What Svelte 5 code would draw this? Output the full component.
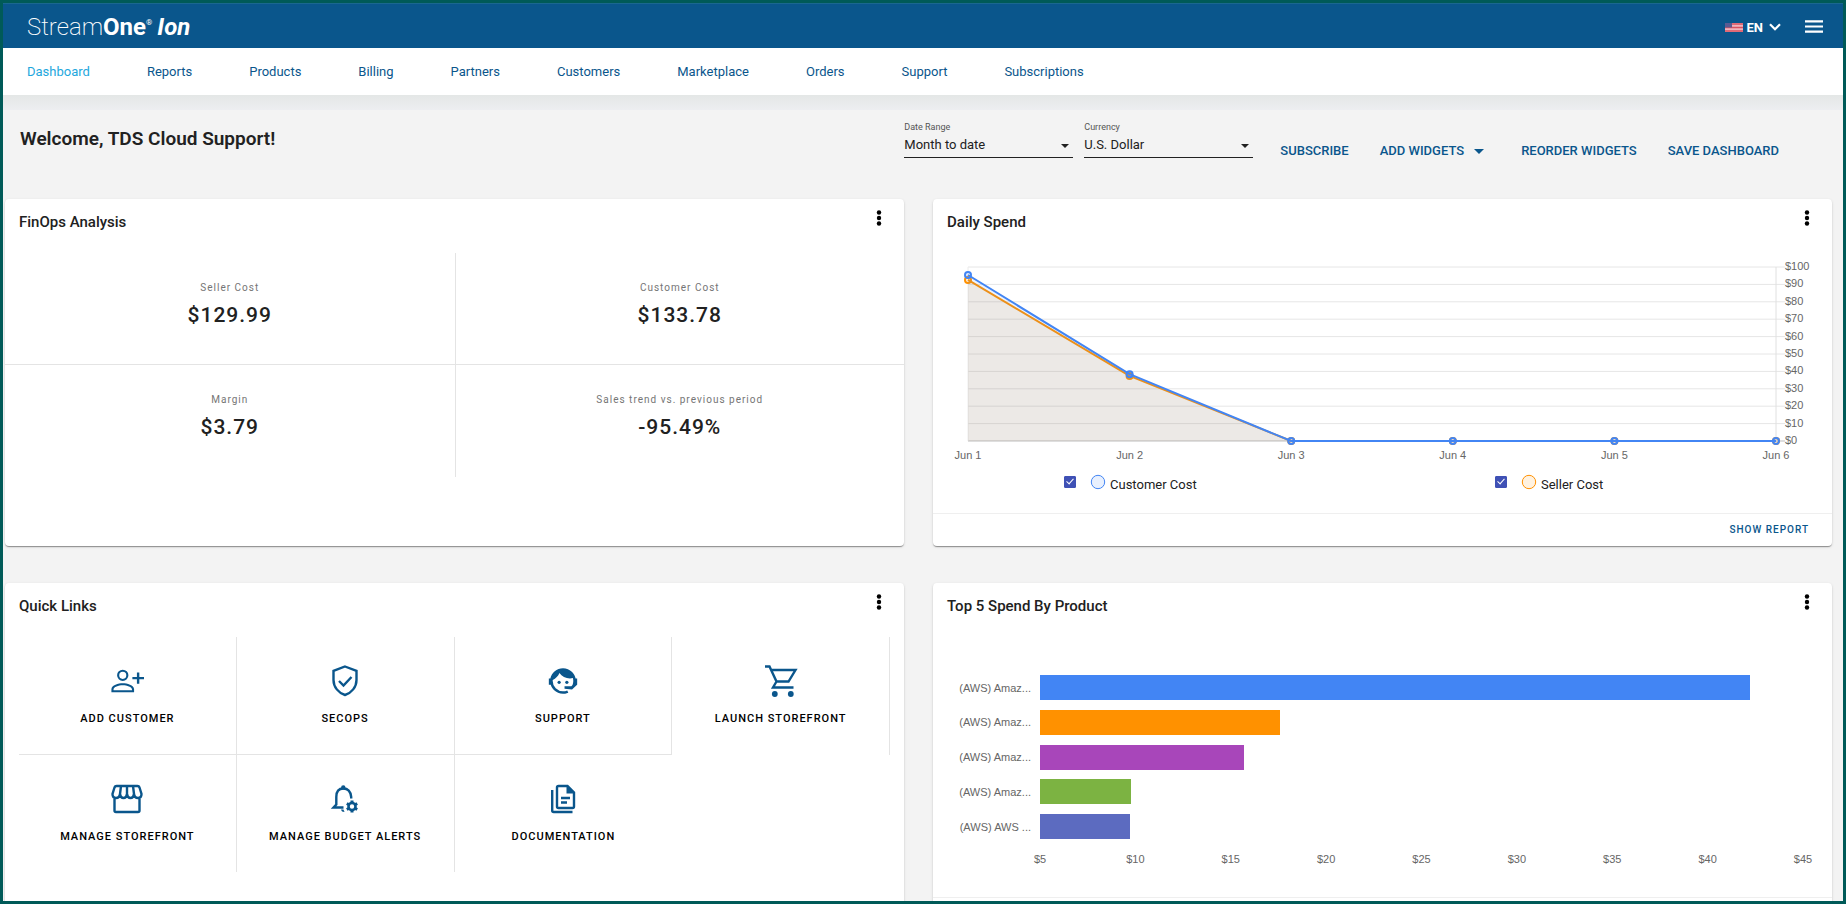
<script>
	const navItems = [
		'Dashboard',
		'Reports',
		'Products',
		'Billing',
		'Partners',
		'Customers',
		'Marketplace',
		'Orders',
		'Support',
		'Subscriptions'
	];
	let activeItem = 'Dashboard';
	let dateRange = 'Month to date';
	let currency = 'U.S. Dollar';

	const metrics = [
		{ label: 'Seller Cost', value: '$129.99' },
		{ label: 'Customer Cost', value: '$133.78' },
		{ label: 'Margin', value: '$3.79' },
		{ label: 'Sales trend vs. previous period', value: '-95.49%' }
	];

	const quickLinks = [
		{ icon: 'person', label: 'Add Customer' },
		{ icon: 'shield', label: 'SecOps' },
		{ icon: 'agent', label: 'Support' },
		{ icon: 'cart', label: 'Launch Storefront' },
		{ icon: 'store', label: 'Manage Storefront' },
		{ icon: 'bell', label: 'Manage Budget Alerts' },
		{ icon: 'docs', label: 'Documentation' }
	];

	// daily spend chart
	const days = ['Jun 1', 'Jun 2', 'Jun 3', 'Jun 4', 'Jun 5', 'Jun 6'];
	const spendTicks = [100, 90, 80, 70, 60, 50, 40, 30, 20, 10, 0];
	const plotLeft = 35;
	const plotTop = 14;
	const plotHeight = 174;
	let series = [
		{ name: 'Customer Cost', color: '#4285f4', values: [95.4, 38.4, 0, 0, 0, 0], shown: true },
		{ name: 'Seller Cost', color: '#ff9100', values: [92.6, 37.4, 0, 0, 0, 0], shown: true }
	];
	let chartWidth = 899;
	$: plotWidth = chartWidth - plotLeft - 56;
	$: xOf = (i) => plotLeft + (plotWidth * i) / (days.length - 1);
	const yOf = (value) => plotTop + plotHeight * (1 - value / 100);
	$: lines = series
		.filter((s) => s.shown)
		.map((s) => ({ ...s, points: s.values.map((v, i) => [xOf(i), yOf(v)]) }))
		.reverse();

	// top 5 products
	const products = [
		{ name: '(AWS) Amaz...', value: 42.2, color: '#4285f4' },
		{ name: '(AWS) Amaz...', value: 17.6, color: '#ff9100' },
		{ name: '(AWS) Amaz...', value: 15.7, color: '#a846ba' },
		{ name: '(AWS) Amaz...', value: 9.75, color: '#7cb342' },
		{ name: '(AWS) AWS ...', value: 9.7, color: '#5c6bc0' }
	];
	const productTicks = [5, 10, 15, 20, 25, 30, 35, 40, 45];
	const barWidth = (value) => ((value - 5) / 40) * 100;
</script>

{#snippet heading(title)}
	<header class="card-header">
		<h2>{title}</h2>
		<button type="button" class="kebab" aria-label="{title} options">
			<svg width="24" height="24" viewBox="0 0 24 24">
				<circle cx="12" cy="6.5" r="2.2" />
				<circle cx="12" cy="12" r="2.2" />
				<circle cx="12" cy="17.5" r="2.2" />
			</svg>
		</button>
	</header>
{/snippet}

<div class="app">
	<header class="topbar">
		<a class="logo" href="#home">
			<span class="thin">Stream</span><span class="bold">One</span><sup>®</sup><span class="ion">Ion</span>
		</a>
		<button type="button" class="language">
			<svg width="18" height="9" viewBox="0 0 18 9">
				<rect width="18" height="9" fill="#f0b4bd" />
				<path d="M0 1h18M0 4.5h18M0 8h18" stroke="#d9515f" stroke-width="1.6" />
				<rect width="7" height="4.5" fill="#5a5a92" />
			</svg>
			EN
			<svg class="chevron" width="12" height="8" viewBox="0 0 12 8">
				<path d="M1 1.2l5 5 5-5" fill="none" stroke="#fff" stroke-width="2.2" />
			</svg>
		</button>
		<button type="button" class="menu" aria-label="Menu">
			<svg width="18" height="13" viewBox="0 0 18 13">
				<path d="M0 1.3h18M0 6.5h18M0 11.7h18" stroke="#fff" stroke-width="2.2" />
			</svg>
		</button>
	</header>

	<nav>
		{#each navItems as item}
			<a
				href="#{item.toLowerCase()}"
				class:active={item == activeItem}
				on:click={() => (activeItem = item)}>{item}</a
			>
		{/each}
	</nav>

	<main>
		<div class="toolbar">
			<h1>Welcome, TDS Cloud Support!</h1>
			<div class="filters">
				<div class="field">
					<label for="date-range">Date Range</label>
					<select id="date-range" bind:value={dateRange}>
						<option>Month to date</option>
						<option>Last month</option>
						<option>Year to date</option>
					</select>
					<svg width="8" height="4" viewBox="0 0 8 4"><path d="M0 0h8L4 4z" /></svg>
				</div>
				<div class="field">
					<label for="currency">Currency</label>
					<select id="currency" bind:value={currency}>
						<option>U.S. Dollar</option>
						<option>Euro</option>
					</select>
					<svg width="8" height="4" viewBox="0 0 8 4"><path d="M0 0h8L4 4z" /></svg>
				</div>
			</div>
			<div class="actions">
				<button type="button">SUBSCRIBE</button>
				<button type="button" class="dropdown">
					ADD WIDGETS
					<svg width="10" height="5" viewBox="0 0 10 5"><path d="M0 0h10L5 5z" /></svg>
				</button>
				<button type="button">REORDER WIDGETS</button>
				<button type="button">SAVE DASHBOARD</button>
			</div>
		</div>

		<div class="widgets">
			<section class="card">
				{@render heading('FinOps Analysis')}
				<dl class="metrics">
					{#each metrics as metric}
						<div class="metric">
							<dt>{metric.label}</dt>
							<dd>{metric.value}</dd>
						</div>
					{/each}
				</dl>
			</section>

			<section class="card">
				{@render heading('Daily Spend')}
				<div class="chart" bind:clientWidth={chartWidth}>
					<svg width={chartWidth} height="215">
						{#each spendTicks as tick}
							<line
								x1={plotLeft}
								x2={plotLeft + plotWidth + 9}
								y1={yOf(tick)}
								y2={yOf(tick)}
								stroke={tick ? '#e6e6e6' : '#bdbdbd'}
							/>
							<text x={plotLeft + plotWidth + 9} y={yOf(tick) + 3}>${tick}</text>
						{/each}
						<line x1={xOf(0)} x2={xOf(0)} y1={plotTop} y2={yOf(0)} stroke="#ececec" />
						<line x1={xOf(5)} x2={xOf(5)} y1={plotTop} y2={yOf(0)} stroke="#e0e0e0" />
						{#each days as day, i}
							<text x={xOf(i)} y="206" text-anchor="middle">{day}</text>
						{/each}
						{#each lines as line}
							<polygon
								points="{xOf(0)},{yOf(0)} {line.points.join(' ')}"
								fill={line.color}
								fill-opacity="0.1"
							/>
							<polyline points={line.points.join(' ')} fill="none" stroke={line.color} stroke-width="2" />
							{#each line.points as [x, y]}
								<circle
									cx={x}
									cy={y}
									r="3"
									fill={line.color}
									fill-opacity="0.1"
									stroke={line.color}
									stroke-width="2"
								/>
							{/each}
						{/each}
					</svg>
				</div>
				<div class="legend">
					{#each series as s}
						<label>
							<input type="checkbox" bind:checked={s.shown} />
							<svg width="16" height="16" viewBox="0 0 16 16">
								<circle cx="8" cy="8" r="6.7" fill={s.color} fill-opacity="0.12" stroke={s.color} />
							</svg>
							<span>{s.name}</span>
						</label>
					{/each}
				</div>
				<footer><a href="#daily-report">SHOW REPORT</a></footer>
			</section>

			<section class="card">
				{@render heading('Quick Links')}
				<div class="links">
					{#each quickLinks as link}
						<a href="#{link.icon}">
							{#if link.icon == 'person'}
								<svg viewBox="0 0 24 24">
									<path
										d="M19 6v3.2h-3.2v1.6H19V14h1.700v-3.200H24V9.200h-3.300V6zM9 12a4 4 0 1 0 0-8 4 4 0 0 0 0 8zm0-6.500a2.500 2.500 0 1 1 0 5 2.500 2.500 0 0 1 0-5zM9 13.500c-3 0-8 1.200-8 4.300V20h16v-2.200c0-3.100-5-4.300-8-4.300zm6.500 5h-13v-.7c0-1.600 3.500-2.800 6.500-2.800s6.500 1.200 6.500 2.800z"
									/>
								</svg>
							{:else if link.icon == 'shield'}
								<svg class="stroked" viewBox="0 0 34 34">
									<path d="M17 2.500L28.500 6.800V16c0 7-5 13-11.500 15C10.500 29 5.500 23 5.500 16V6.800z" />
									<path d="M11 17l4.500 4.500 8-8.500" />
								</svg>
							{:else if link.icon == 'agent'}
								<svg viewBox="0 0 24 24">
									<path
										d="M18.720 14.760C19.070 13.910 19.260 13 19.260 12C19.260 11.280 19.150 10.590 18.960 9.950C18.310 10.100 17.630 10.180 16.920 10.180C13.860 10.180 11.150 8.670 9.500 6.340C8.610 8.500 6.910 10.260 4.770 11.220C4.730 11.470 4.730 11.740 4.730 12A7.270 7.270 0 0 0 12 19.270C13.050 19.270 14.060 19.040 14.970 18.630C15.540 19.720 15.800 20.260 15.780 20.260C14.140 20.810 12.870 21.080 12 21.080C9.580 21.080 7.270 20.130 5.570 18.420C4.530 17.380 3.760 16.110 3.330 14.730H2V10.180H3.090C3.930 6.040 7.600 2.920 12 2.920C14.400 2.920 16.710 3.870 18.420 5.580C19.690 6.840 20.540 8.450 20.890 10.180H22V14.730H21.940L18.380 18L13.080 17.400V15.730H17.910z"
									/>
									<circle cx="9.270" cy="12.900" r="1.140" />
									<circle cx="14.720" cy="12.900" r="1.140" />
								</svg>
							{:else if link.icon == 'cart'}
								<svg class="stroked" viewBox="0 0 34 34">
									<path d="M1 2.500h4.500L12.500 17.500h12L31.500 6H7M12.500 17.500l-3.500 6h20.500" />
									<circle class="solid" cx="10.800" cy="30" r="2.900" />
									<circle class="solid" cx="26.800" cy="30" r="2.900" />
								</svg>
							{:else if link.icon == 'store'}
								<svg class="stroked" viewBox="0 0 34 34">
									<path
										d="M4.500 16v12.500q0 1.500 1.500 1.500h22q1.500 0 1.500-1.500V16M6.500 4h21q1.500 0 2 1.500L31.500 12q0 4-3.500 4t-4-4q-.5 4-3.500 4T17 12q-.5 4-3.500 4T10 12q-.5 4-4 4t-3.500-4L4.500 5.500Q5 4 6.500 4zM11 4l-1 8M17 4v8M23 4l1 8"
									/>
								</svg>
							{:else if link.icon == 'bell'}
								<svg class="stroked" viewBox="0 0 34 34">
									<path d="M15.500 25.500H5.500l2.800-3V15q0-8.500 7-8.500T23.200 15v1.500" />
									<circle class="solid" cx="15.300" cy="5.500" r="2.200" />
									<path class="solid" d="M13 27.500h2.500l1 2.500q-3 0-3.500-2.500z" />
									<circle cx="24" cy="24.500" r="3.500" stroke-width="2.600" />
									<path
										d="M24 18.500v2.500M24 28v2.500M18.800 21.500l2.200 1.200M27 26.300l2.200 1.200M18.800 27.500l2.200-1.200M27 22.700l2.200-1.200"
										stroke-width="3"
									/>
								</svg>
							{:else}
								<svg class="stroked" viewBox="0 0 34 34">
									<path
										d="M12.500 4h9L28 10.500V24.500q0 1.500-1.500 1.500h-14Q11 26 11 24.500V5.500Q11 4 12.500 4zM6.200 8v20.500q0 1.500 1.500 1.500H26.500M15 16h9M15 20.500h6"
									/>
									<path class="solid" d="M20.500 4v7.500H28L21.500 4z" />
								</svg>
							{/if}
							<span>{link.label}</span>
						</a>
					{/each}
				</div>
			</section>

			<section class="card">
				{@render heading('Top 5 Spend By Product')}
				<div class="products">
					<div class="bars">
						{#each products as product}
							<div class="bar-row">
								<span>{product.name}</span>
								<div class="track">
									<div
										class="bar"
										style="width: {barWidth(product.value)}%; background-color: {product.color}"
									></div>
								</div>
							</div>
						{/each}
					</div>
					<div class="axis">
						{#each productTicks as tick}
							<span>${tick}</span>
						{/each}
					</div>
				</div>
				<footer></footer>
			</section>
		</div>
	</main>
</div>

<style>
	:global(body) {
		background-color: #f3f3f3;
	}
	.app {
		box-sizing: border-box;
		height: 100vh;
		border: 3px solid #005a58;
		display: flex;
		flex-direction: column;
		overflow: hidden;
		font-family: Roboto, 'Liberation Sans', sans-serif;
		font-size: 13px;
		color: #212121;
		background-color: #f3f3f3;
	}
	h1,
	h2,
	dl,
	dd {
		margin: 0;
	}
	a {
		text-decoration: none;
	}
	button {
		font: inherit;
		color: inherit;
		background-color: transparent;
		border: none;
		padding: 0;
		cursor: pointer;
	}

	.topbar {
		flex: none;
		display: flex;
		align-items: center;
		height: 44px;
		border-top: 1px solid #1a6790;
		padding: 0 20px 0 24px;
		background-color: #0a568c;
		color: white;
	}
	.logo {
		margin-right: auto;
		padding-top: 3px;
		color: white;
		font-size: 24px;
		line-height: 41px;
	}
	.thin {
		font-weight: 200;
	}
	.bold {
		font-weight: 700;
	}
	.ion {
		margin-left: 5px;
		font-weight: 700;
		font-style: italic;
	}
	sup {
		font-size: 8px;
		line-height: 1;
		vertical-align: 10px;
	}
	.language {
		display: flex;
		align-items: center;
		gap: 4px;
		margin-top: 2px;
		font-weight: 700;
	}
	.chevron {
		margin-left: 2px;
	}
	.menu {
		display: flex;
		margin-left: 24px;
	}

	nav {
		flex: none;
		display: flex;
		gap: 57px;
		padding: 0 24px;
		line-height: 47px;
		background-color: white;
	}
	nav a {
		color: #0a568c;
	}
	nav .active {
		color: #1ea7dd;
	}

	main {
		flex: 1;
		overflow-y: auto;
		scrollbar-width: none;
		padding: 0 11px 37px 2px;
		background: linear-gradient(#e4e7e6, #edeef1) top / 100% 15px no-repeat #f3f3f3;
	}
	.toolbar {
		display: flex;
		align-items: flex-start;
		box-sizing: border-box;
		min-height: 104px;
		padding: 26px 53px 0 15px;
	}
	h1 {
		margin-right: auto;
		font-size: 19px;
		line-height: 36px;
		font-weight: 600;
	}
	.filters {
		display: flex;
		gap: 11px;
	}
	.field {
		position: relative;
		width: 169px;
	}
	.field label {
		display: block;
		font-size: 9px;
		line-height: 12px;
		color: #555;
	}
	.field select {
		appearance: none;
		width: 100%;
		height: 25px;
		padding: 0 0 2px;
		font: inherit;
		color: inherit;
		background-color: transparent;
		border: none;
		border-bottom: 1px solid #212121;
		border-radius: 0;
	}
	.field svg {
		position: absolute;
		right: 4px;
		top: 23px;
		fill: #212121;
		pointer-events: none;
	}
	.actions {
		display: flex;
		gap: 31px;
		padding: 20px 0 0 27px;
		color: #0a568c;
		font-weight: 500;
		line-height: 20px;
	}
	.dropdown {
		display: flex;
		align-items: center;
		gap: 10px;
		padding-right: 6px;
	}
	.dropdown svg {
		fill: #0a568c;
	}

	.widgets {
		display: grid;
		grid-template-columns: 1fr 1fr;
		gap: 37px 29px;
	}
	.card {
		display: flex;
		flex-direction: column;
		min-width: 0;
		min-height: 347px;
		border-radius: 4px;
		background-color: white;
		box-shadow:
			0 2px 1px -1px rgba(0, 0, 0, 0.2),
			0 1px 1px 0 rgba(0, 0, 0, 0.2),
			0 1px 3px 0 rgba(0, 0, 0, 0.12);
	}
	.card-header {
		display: flex;
		justify-content: space-between;
		align-items: flex-start;
		height: 48px;
		padding: 6px 13px 0 14px;
	}
	h2 {
		font-size: 15px;
		line-height: 34px;
		font-weight: 500;
	}
	.kebab {
		height: 26px;
		padding-top: 1px;
	}

	.metrics {
		display: grid;
		grid-template-columns: 1fr 1fr;
		grid-auto-rows: 112px;
		text-align: center;
	}
	.metric {
		box-sizing: border-box;
		padding-top: 27px;
		letter-spacing: 1px;
	}
	.metric:nth-child(even) {
		border-left: 1px solid #e4e4e4;
	}
	.metric:nth-child(-n + 2) {
		border-bottom: 1px solid #e4e4e4;
	}
	dt {
		font-size: 10px;
		line-height: 16px;
		color: #757575;
	}
	dd {
		font-size: 21px;
		line-height: 38px;
		font-weight: 500;
	}

	.chart {
		height: 215px;
		overflow: hidden;
	}
	.chart text {
		font-family: 'Liberation Sans', Arial, sans-serif;
		font-size: 11px;
		fill: #666;
	}
	.legend {
		display: grid;
		grid-template-columns: 1fr 1fr;
		padding: 6px 22px 0 15px;
	}
	.legend label {
		display: flex;
		align-items: flex-start;
		padding-left: 116px;
	}
	.legend input {
		appearance: none;
		display: flex;
		justify-content: center;
		width: 12px;
		height: 12px;
		margin: 2px 14px 0 0;
		border-radius: 1px;
		border: 1px solid #3f51b5;
	}
	.legend input:checked {
		background-color: #3f51b5;
	}
	.legend input:checked::after {
		content: '';
		width: 3px;
		height: 6px;
		border: solid white;
		border-width: 0 1px 1px 0;
		transform: rotate(42deg);
	}
	.legend span {
		margin-left: 4px;
		line-height: 22px;
	}
	footer {
		min-height: 32px;
		margin-top: auto;
		border-top: 1px solid #efefef;
		padding-right: 23px;
		text-align: right;
		font-size: 10px;
		line-height: 32px;
		letter-spacing: 1px;
		font-weight: 500;
	}
	footer a {
		color: #0a568c;
	}

	.links {
		display: grid;
		grid-template-columns: repeat(4, 1fr);
		grid-template-rows: 118px 117px;
		padding: 0 14px;
	}
	.links a {
		display: flex;
		flex-direction: column;
		align-items: center;
		gap: 13px;
		padding-top: 27px;
		border-right: 1px solid #e4e4e4;
		color: black;
		font-size: 11px;
		line-height: 16px;
		font-weight: 500;
		letter-spacing: 1px;
		text-transform: uppercase;
	}
	.links a:nth-child(-n + 3) {
		border-bottom: 1px solid #e4e4e4;
	}
	.links a:last-child {
		border-right: none;
	}
	.links svg {
		width: 34px;
		height: 34px;
		fill: #0a568c;
	}
	.links .stroked {
		fill: none;
		stroke: #0a568c;
		stroke-width: 2.4;
	}
	.links .solid {
		fill: #0a568c;
		stroke: none;
	}

	.products {
		padding: 38px 29px 0 15px;
		color: #666;
		font-family: 'Liberation Sans', Arial, sans-serif;
		font-size: 11px;
		line-height: 16px;
	}
	.bars {
		display: flex;
		flex-direction: column;
		justify-content: space-between;
		height: 164px;
	}
	.bar-row {
		display: flex;
		align-items: center;
		gap: 9px;
	}
	.bar-row span {
		width: 83px;
		text-align: right;
	}
	.track {
		flex: 1;
	}
	.bar {
		height: 25px;
	}
	.axis {
		display: flex;
		justify-content: space-between;
		margin: 12px 0 0 92px;
	}
	.axis span {
		display: flex;
		justify-content: center;
		width: 0;
	}
</style>
